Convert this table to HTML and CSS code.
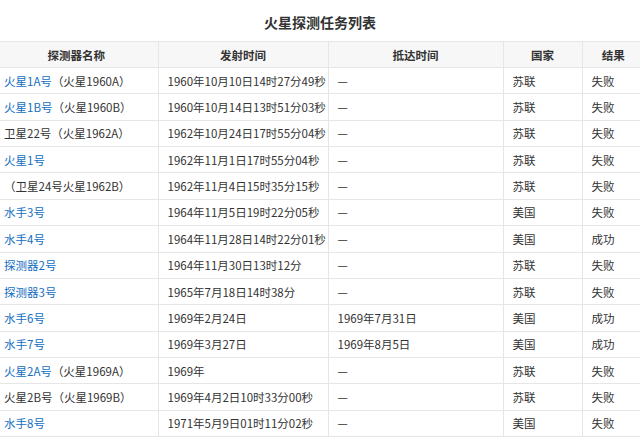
FILE: index.html
```html
<!DOCTYPE html>
<html lang="zh-CN">
<head>
<meta charset="utf-8">
<title>火星探测任务列表</title>
<link rel="stylesheet" href="styles.css">
</head>
<body>
<div class="page">
  <div class="title">火星探测任务列表</div>
  <table class="grid">
    <colgroup>
      <col class="c1"><col class="c2"><col class="c3"><col class="c4"><col class="c5">
    </colgroup>
    <thead>
      <tr><th>探测器名称</th><th>发射时间</th><th>抵达时间</th><th>国家</th><th>结果</th></tr>
    </thead>
    <tbody>
      <tr><td><a class="lnk">火星1A号</a>（火星1960A）</td><td>1960年10月10日14时27分49秒</td><td>—</td><td>苏联</td><td>失败</td></tr>
      <tr><td><a class="lnk">火星1B号</a>（火星1960B）</td><td>1960年10月14日13时51分03秒</td><td>—</td><td>苏联</td><td>失败</td></tr>
      <tr><td>卫星22号（火星1962A）</td><td>1962年10月24日17时55分04秒</td><td>—</td><td>苏联</td><td>失败</td></tr>
      <tr><td><a class="lnk">火星1号</a></td><td>1962年11月1日17时55分04秒</td><td>—</td><td>苏联</td><td>失败</td></tr>
      <tr><td>（卫星24号火星1962B）</td><td>1962年11月4日15时35分15秒</td><td>—</td><td>苏联</td><td>失败</td></tr>
      <tr><td><a class="lnk">水手3号</a></td><td>1964年11月5日19时22分05秒</td><td>—</td><td>美国</td><td>失败</td></tr>
      <tr><td><a class="lnk">水手4号</a></td><td>1964年11月28日14时22分01秒</td><td>—</td><td>美国</td><td>成功</td></tr>
      <tr><td><a class="lnk">探测器2号</a></td><td>1964年11月30日13时12分</td><td>—</td><td>苏联</td><td>失败</td></tr>
      <tr><td><a class="lnk">探测器3号</a></td><td>1965年7月18日14时38分</td><td>—</td><td>苏联</td><td>失败</td></tr>
      <tr><td><a class="lnk">水手6号</a></td><td>1969年2月24日</td><td>1969年7月31日</td><td>美国</td><td>成功</td></tr>
      <tr><td><a class="lnk">水手7号</a></td><td>1969年3月27日</td><td>1969年8月5日</td><td>美国</td><td>成功</td></tr>
      <tr><td><a class="lnk">火星2A号</a>（火星1969A）</td><td>1969年</td><td>—</td><td>苏联</td><td>失败</td></tr>
      <tr><td>火星2B号（火星1969B）</td><td>1969年4月2日10时33分00秒</td><td>—</td><td>苏联</td><td>失败</td></tr>
      <tr><td><a class="lnk">水手8号</a></td><td>1971年5月9日01时11分02秒</td><td>—</td><td>美国</td><td>失败</td></tr>
    </tbody>
  </table>
</div>
</body>
</html>
```
FILE: styles.css
```css
html, body {
  margin: 0;
  padding: 0;
  background: #fff;
}
body {
  font-family: "Noto Sans CJK SC", "Liberation Sans", sans-serif;
  color: #333;
  font-size: 11.5px;
}
.page {
  width: 640px;
  height: 439px;
  overflow: hidden;
}
.title {
  height: 41px;
  box-sizing: border-box;
  padding-top: 13px;
  text-align: center;
  font-size: 14px;
  line-height: 18px;
  font-weight: bold;
  color: #333;
}
.grid {
  border-collapse: collapse;
  table-layout: fixed;
  width: 649px;
  margin-left: -5px;
}
.c1 { width: 163px; }
.c2 { width: 170px; }
.c3 { width: 175px; }
.c4 { width: 79px; }
.c5 { width: 62px; }
.grid th, .grid td {
  border: 1px solid #e6e6e6;
  padding: 0 9px;
  white-space: nowrap;
  overflow: hidden;
  text-align: left;
  line-height: 16px;
}
.grid th {
  background: #f7f7f7;
  font-weight: bold;
  text-align: center;
  height: 25px;
}
.grid td {
  height: 25.36px;
}
.grid tr > :first-child { border-left: none; }
.grid tr > :last-child { border-right: none; }
.lnk {
  color: #136ec2;
  text-decoration: none;
}
```
